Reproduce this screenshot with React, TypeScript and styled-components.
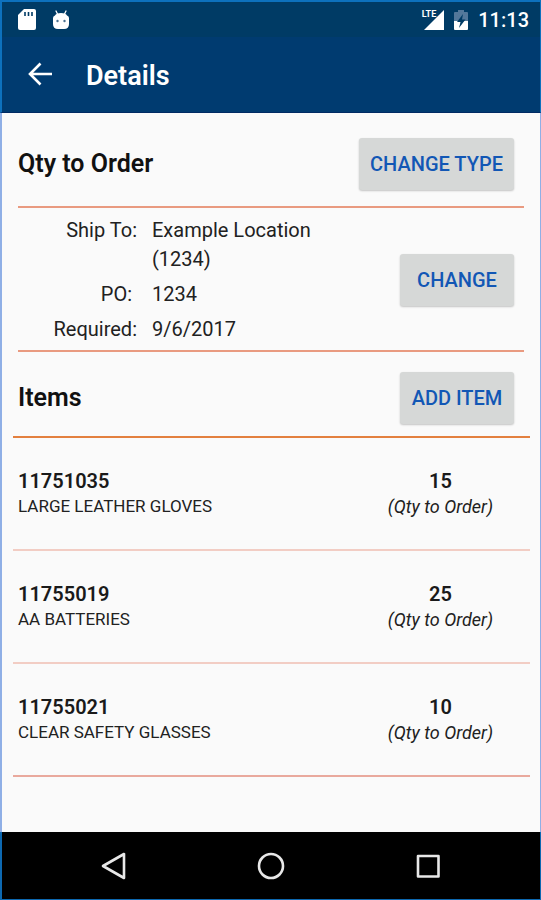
import React from "react";
import styled, { createGlobalStyle } from "styled-components";

const GlobalStyle = createGlobalStyle`
  *, *::before, *::after { box-sizing: border-box; }
  body {
    margin: 0;
    background: #fafafa;
    color: #212121;
    font-family: Roboto, "Liberation Sans", sans-serif;
  }
  h1, h2, h3, p, dl, dt, dd, ul { margin: 0; padding: 0; }
`;

const Screen = styled.div`
  display: flex;
  flex-direction: column;
  min-height: 100vh;
`;

const Header = styled.header`
  background: #003b70;
  color: #fff;
  border: solid #0d71bd;
  border-width: 2px 1px 0 2px;
  border-bottom: 1px solid #002a63;
`;

const StatusBar = styled.div`
  display: flex;
  align-items: center;
  justify-content: space-between;
  height: 35px;
  padding: 0 11px 0 16px;
  background: #003b65;
`;

const StatusGroup = styled.div<{ $gap: number }>`
  display: flex;
  align-items: center;
  gap: ${({ $gap }) => $gap}px;
`;

const Clock = styled.time`
  font-size: 20px;
  line-height: 24px;
  font-weight: 500;
`;

const Toolbar = styled.div`
  display: flex;
  align-items: center;
  gap: 27px;
  height: 75px;
  padding: 2px 19px 0;
`;

const IconButton = styled.button`
  display: flex;
  align-items: center;
  justify-content: center;
  padding: 4px;
  border: 0;
  background: none;
  color: inherit;
  cursor: pointer;
`;

const Title = styled.h1`
  font-size: 27px;
  line-height: 32px;
  font-weight: 600;
`;

const Content = styled.main`
  flex: 1;
  background: #fafafa;
  border: solid #8fafe6;
  border-width: 0 1px 0 2px;
  padding: 0 10px 0 11px;
`;

const SectionHead = styled.div<{ $height: number }>`
  display: flex;
  align-items: center;
  justify-content: space-between;
  min-height: ${({ $height }) => $height}px;
  padding: 8px 16px 0 5px;
`;

const SectionTitle = styled.h2`
  color: #111;
  font-size: 25px;
  line-height: 30px;
  font-weight: 600;
`;

const ActionButton = styled.button`
  flex: none;
  min-width: 114px;
  height: 52px;
  padding: 0 11px;
  border: 0;
  border-radius: 3px;
  background: #d6d8d7;
  box-shadow: 0 1px 2px rgba(0, 0, 0, 0.22);
  color: #1257b5;
  font: 500 20px/24px Roboto, "Liberation Sans", sans-serif;
  text-transform: uppercase;
  cursor: pointer;
`;

const Shipping = styled.section`
  display: flex;
  align-items: center;
  justify-content: space-between;
  margin: 0 6px 0 5px;
  padding: 8px 10px 6px 0;
  border: solid #e99a80;
  border-width: 2px 0;
`;

const Facts = styled.dl`
  display: grid;
  grid-template-columns: 119px 180px;
  gap: 6px 15px;
  font-size: 20px;
  line-height: 29px;
`;

const FactLabel = styled.dt`
  text-align: right;
  white-space: pre;
`;

const FactValue = styled.dd``;

const ItemList = styled.ul`
  list-style: none;
  border-top: 2px solid #e3803f;
`;

const ItemRow = styled.li`
  display: flex;
  align-items: center;
  justify-content: space-between;
  min-height: 113px;
  padding: 1px 37px 0 5px;
  border-bottom: 2px solid #f2cdc4;

  &:last-child {
    border-bottom-color: #e9a99d;
  }
`;

const ItemCell = styled.div<{ $center?: boolean }>`
  text-align: ${({ $center }) => ($center ? "center" : "left")};
`;

const Strong = styled.h3`
  color: #1a1a1a;
  font-size: 20px;
  line-height: 25px;
  font-weight: 600;
`;

const Caption = styled.p<{ $italic?: boolean }>`
  font-size: ${({ $italic }) => ($italic ? 18 : 17)}px;
  line-height: 25px;
  font-style: ${({ $italic }) => ($italic ? "italic" : "normal")};
`;

const NavBar = styled.nav`
  display: flex;
  align-items: center;
  justify-content: center;
  gap: 117px;
  height: 68px;
  background: #000;
  color: #e8e8e8;
  border: solid #0d68b0;
  border-width: 0 1px 1px 2px;
`;

const SdCardIcon = () => (
  <svg width="18" height="21" viewBox="0 0 18 21" aria-hidden="true">
    <path d="M6 0H16Q18 0 18 2V19Q18 21 16 21H2Q0 21 0 19V6Z" fill="#fff" />
    <path d="M7 3V7M10.500 3V7M14 3V7" stroke="#003b65" strokeWidth="1.600" />
  </svg>
);

const AndroidIcon = () => (
  <svg width="18" height="20" viewBox="0 0 18 20" aria-hidden="true">
    <path d="M4 1L6 5M14 1L12 5" stroke="#fff" strokeWidth="1.300" strokeLinecap="round" />
    <path d="M1 8Q1 6 3 5.500Q4 3 9 3T15 5.500Q17 6 17 8V14Q17 19 12 19H6Q1 19 1 14Z" fill="#fff" />
    <circle cx="5.500" cy="11" r="1.200" fill="#4b7190" />
    <circle cx="12.500" cy="11" r="1.200" fill="#4b7190" />
  </svg>
);

const SignalGroup = styled.div`
  display: flex;
  align-items: flex-start;
`;

const NetworkLabel = styled.span`
  margin-right: -12px;
  font-size: 9px;
  line-height: 9px;
  font-weight: 700;
`;

const SignalIcon = () => (
  <svg width="20" height="20" viewBox="0 0 20 20" aria-hidden="true">
    <path d="M20 0V20H0Z" fill="#fff" />
  </svg>
);

const BatteryIcon = () => (
  <svg width="14" height="20" viewBox="0 0 14 20" aria-hidden="true">
    <path d="M4 0H10V2H13Q14 2 14 3V11H0V3Q0 2 1 2H4Z" fill="#54789a" />
    <path d="M0 11H14V19Q14 20 13 20H1Q0 20 0 19Z" fill="#fff" />
    <path d="M9 4L3 12H6.500L5 18L11.500 9.500H8Z" fill="#003b65" />
  </svg>
);

const ArrowIcon = () => (
  <svg width="30" height="30" viewBox="0 0 30 30" fill="none" stroke="currentColor" strokeWidth="2.600" aria-hidden="true">
    <path d="M27 13H5M15.500 2.500L5 13L15.500 23.500" />
  </svg>
);

const BackIcon = () => (
  <svg width="32" height="32" viewBox="0 0 32 32" fill="none" stroke="currentColor" strokeWidth="2.600" strokeLinejoin="round" aria-hidden="true">
    <path d="M26 4V28L5 16Z" />
  </svg>
);

const HomeIcon = () => (
  <svg width="32" height="32" viewBox="0 0 32 32" fill="none" stroke="currentColor" strokeWidth="2.600" aria-hidden="true">
    <circle cx="16" cy="16" r="12" />
  </svg>
);

const RecentsIcon = () => (
  <svg width="32" height="32" viewBox="0 0 32 32" fill="none" stroke="currentColor" strokeWidth="2.600" strokeLinejoin="round" aria-hidden="true">
    <rect x="6" y="6" width="20.500" height="20.500" />
  </svg>
);

const facts = [
  { label: "Ship To:", value: "Example Location (1234)" },
  { label: "PO: ", value: "1234" },
  { label: "Required:", value: "9/6/2017" },
];

const items = [
  { id: "11751035", name: "LARGE LEATHER GLOVES", qty: 15 },
  { id: "11755019", name: "AA BATTERIES", qty: 25 },
  { id: "11755021", name: "CLEAR SAFETY GLASSES", qty: 10 },
];

export default function App() {
  return (
    <>
      <GlobalStyle />
      <Screen>
        <Header>
          <StatusBar>
            <StatusGroup $gap={16}>
              <SdCardIcon />
              <AndroidIcon />
            </StatusGroup>
            <StatusGroup $gap={10}>
              <SignalGroup>
                <NetworkLabel>LTE</NetworkLabel>
                <SignalIcon />
              </SignalGroup>
              <BatteryIcon />
              <Clock>11:13</Clock>
            </StatusGroup>
          </StatusBar>
          <Toolbar>
            <IconButton type="button" aria-label="Navigate up">
              <ArrowIcon />
            </IconButton>
            <Title>Details</Title>
          </Toolbar>
        </Header>
        <Content>
          <SectionHead $height={93}>
            <SectionTitle>Qty to Order</SectionTitle>
            <ActionButton type="button">Change type</ActionButton>
          </SectionHead>
          <Shipping>
            <Facts>
              {facts.map((fact) => (
                <React.Fragment key={fact.label}>
                  <FactLabel>{fact.label}</FactLabel>
                  <FactValue>{fact.value}</FactValue>
                </React.Fragment>
              ))}
            </Facts>
            <ActionButton type="button">Change</ActionButton>
          </Shipping>
          <SectionHead $height={84}>
            <SectionTitle>Items</SectionTitle>
            <ActionButton type="button">Add item</ActionButton>
          </SectionHead>
          <ItemList>
            {items.map((item) => (
              <ItemRow key={item.id}>
                <ItemCell>
                  <Strong>{item.id}</Strong>
                  <Caption>{item.name}</Caption>
                </ItemCell>
                <ItemCell $center>
                  <Strong as="p">{item.qty}</Strong>
                  <Caption $italic>(Qty to Order)</Caption>
                </ItemCell>
              </ItemRow>
            ))}
          </ItemList>
        </Content>
        <NavBar aria-label="System">
          <IconButton type="button" aria-label="Back">
            <BackIcon />
          </IconButton>
          <IconButton type="button" aria-label="Home">
            <HomeIcon />
          </IconButton>
          <IconButton type="button" aria-label="Recent apps">
            <RecentsIcon />
          </IconButton>
        </NavBar>
      </Screen>
    </>
  );
}
